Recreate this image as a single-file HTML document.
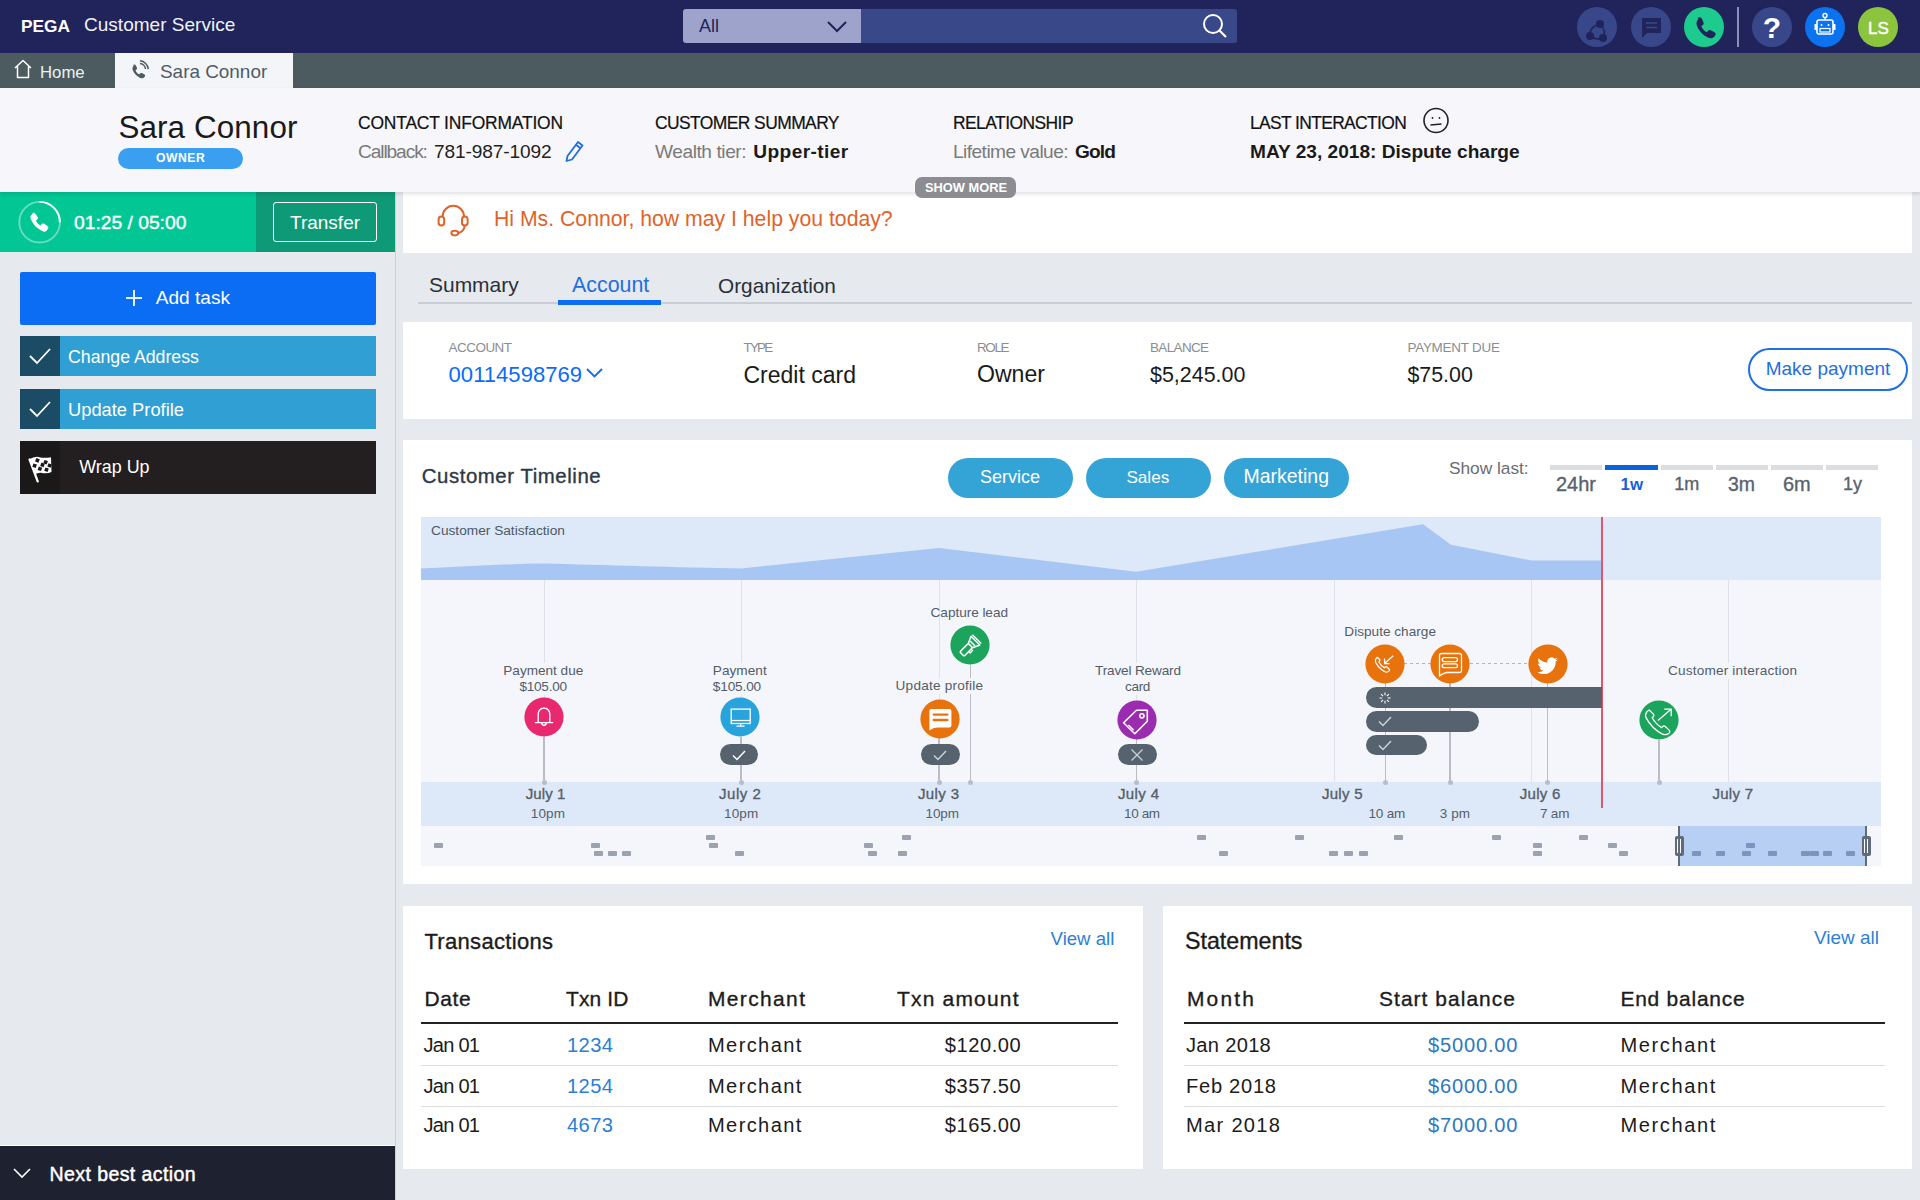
<!DOCTYPE html><html><head><meta charset="utf-8"><style>
html,body{margin:0;padding:0;}
body{width:1920px;height:1200px;position:relative;overflow:hidden;background:#e6e9ee;font-family:"Liberation Sans",sans-serif;}
.t{position:absolute;white-space:nowrap;}
.r{position:absolute;}
</style></head><body>
<div class="r" style="left:0px;top:192px;width:395px;height:1008px;background:#e6e9ee;"></div>
<div class="r" style="left:395px;top:192px;width:1px;height:1008px;background:#cdd1d7;"></div>
<div class="r" style="left:0px;top:192px;width:256px;height:60px;background:#02c795;"></div>
<div class="r" style="left:256px;top:192px;width:139px;height:60px;background:#0f9a77;"></div>
<svg class="r" style="left:17px;top:200px;" width="46" height="46" viewBox="0 0 46 46"><circle cx="22.6" cy="22.2" r="20.3" fill="none" stroke="rgba(255,255,255,0.4)" stroke-width="1.9"/><path d="M22.6 1.9 A20.3 20.3 0 0 1 42.9 22.2" fill="none" stroke="#fff" stroke-width="1.9"/><g transform="translate(10.5 10.6) scale(0.98)"><path d="M5.5 2.5 c1-0.6 2-0.3 2.6 0.6 l2.2 3.4 c0.6 0.9 0.4 2-0.4 2.7 l-1.3 1 c0.9 2.2 2.5 4 4.6 5.1 l1-1.3 c0.7-0.9 1.9-1.1 2.8-0.5 l3.4 2.2 c0.9 0.6 1.2 1.7 0.6 2.6 l-1 1.6 c-0.8 1.3-2.4 1.9-3.9 1.4 C9.7 18.5 5.5 14.3 3.1 7.9 c-0.5-1.5 0.1-3.1 1.4-3.9z" fill="#fff"/></g></svg>
<div class="t" style="left:74.00px;top:211.74px;font-size:19.27px;line-height:22.16px;color:#fff;-webkit-text-stroke:0.4px #fff;letter-spacing:-0.010px;">01:25 / 05:00</div>
<div class="r" style="left:273px;top:202px;width:101.5px;height:38px;background:transparent;border:1.8px solid #fff;border-radius:3px;"></div>
<div class="t" style="left:289.99px;top:211.99px;font-size:19.00px;line-height:21.85px;color:#fff;">Transfer</div>
<div class="r" style="left:20px;top:272px;width:356px;height:53px;background:#0b6cf4;border-radius:2px;"></div>
<svg class="r" style="left:125px;top:289px;" width="18" height="18" viewBox="0 0 18 18"><line x1="9" y1="1" x2="9" y2="17" stroke="#fff" stroke-width="1.8"/><line x1="1" y1="9" x2="17" y2="9" stroke="#fff" stroke-width="1.8"/></svg>
<div class="t" style="left:155.80px;top:287.43px;font-size:19.07px;line-height:21.93px;color:#fff;">Add task</div>
<div class="r" style="left:20px;top:336px;width:356px;height:40px;background:#2f9fd4;"></div>
<div class="r" style="left:20px;top:336px;width:40px;height:40px;background:#1c4b66;"></div>
<svg class="r" style="left:28px;top:345px;" width="24" height="22" viewBox="0 0 24 22"><polyline points="2,11 9,18 22,4" fill="none" stroke="#fff" stroke-width="1.8"/></svg>
<div class="t" style="left:68.00px;top:346.67px;font-size:17.72px;line-height:20.38px;color:#fff;">Change Address</div>
<div class="r" style="left:20px;top:389px;width:356px;height:40px;background:#2f9fd4;"></div>
<div class="r" style="left:20px;top:389px;width:40px;height:40px;background:#1c4b66;"></div>
<svg class="r" style="left:28px;top:398px;" width="24" height="22" viewBox="0 0 24 22"><polyline points="2,11 9,18 22,4" fill="none" stroke="#fff" stroke-width="1.8"/></svg>
<div class="t" style="left:68.00px;top:399.13px;font-size:18.31px;line-height:21.05px;color:#fff;">Update Profile</div>
<div class="r" style="left:20px;top:441px;width:356px;height:53px;background:#231f20;"></div>
<div class="r" style="left:20px;top:441px;width:40px;height:53px;background:#1b1819;"></div>
<svg class="r" style="left:20px;top:441px;" width="40" height="53" viewBox="0 0 40 53"><path d="M9.3 18.3 Q14 15.3 18.5 15.9 Q24.5 17.6 31 16.2 L31.5 30.9 Q27 33.2 21 31.8 Q17.5 31.6 14.8 33.6 Z" fill="#fff"/><line x1="9.6" y1="18.5" x2="17.7" y2="40.4" stroke="#fff" stroke-width="2.3" stroke-linecap="round"/><rect x="15.6" y="17.6" width="3.6" height="3.6" transform="rotate(20 17.4 19.4)" fill="#1b1a1b"/><rect x="23.8" y="19.4" width="3.6" height="3.6" transform="rotate(20 25.6 21.2)" fill="#1b1a1b"/><rect x="12.8" y="22.9" width="3.6" height="3.6" transform="rotate(20 14.6 24.7)" fill="#1b1a1b"/><rect x="20.7" y="22.1" width="3.6" height="3.6" transform="rotate(20 22.5 23.9)" fill="#1b1a1b"/><rect x="27.8" y="22.7" width="3.6" height="3.6" transform="rotate(20 29.6 24.5)" fill="#1b1a1b"/><rect x="18.1" y="26.0" width="3.6" height="3.6" transform="rotate(20 19.9 27.8)" fill="#1b1a1b"/><rect x="24.7" y="26.9" width="3.6" height="3.6" transform="rotate(20 26.5 28.7)" fill="#1b1a1b"/></svg>
<div class="t" style="left:79.30px;top:456.50px;font-size:17.90px;line-height:20.59px;color:#fff;">Wrap Up</div>
<div class="r" style="left:0px;top:1145px;width:395px;height:1px;background:#ffffff;"></div>
<div class="r" style="left:0px;top:1146px;width:395px;height:54px;background:#1e2130;"></div>
<svg class="r" style="left:12px;top:1166px;" width="20" height="14" viewBox="0 0 20 14"><polyline points="2,3 10,11 18,3" fill="none" stroke="#fff" stroke-width="1.6"/></svg>
<div class="t" style="left:49.60px;top:1163.48px;font-size:19.55px;line-height:22.49px;color:#fff;-webkit-text-stroke:0.45px #fff;letter-spacing:0.400px;">Next best action</div>
<div class="r" style="left:403px;top:192px;width:1517px;height:1008px;background:#e6e9ee;"></div>
<div class="r" style="left:403px;top:192px;width:1509px;height:61px;background:#ffffff;"></div>
<svg class="r" style="left:434px;top:204px;" width="38" height="34" viewBox="0 0 38 34"><path d="M8.6 12.5 A10.7 10.7 0 0 1 30 12.5" fill="none" stroke="#e0632a" stroke-width="2"/><rect x="4.6" y="12.6" width="5.6" height="9" rx="2.8" fill="none" stroke="#e0632a" stroke-width="2"/><rect x="28" y="12.6" width="5.6" height="9" rx="2.8" fill="none" stroke="#e0632a" stroke-width="2"/><path d="M30.8 21.4 Q30 27.5 24.6 29" fill="none" stroke="#e0632a" stroke-width="2"/><ellipse cx="20.8" cy="29.1" rx="3.4" ry="2.3" fill="none" stroke="#e0632a" stroke-width="2"/></svg>
<div class="t" style="left:494.00px;top:207.44px;font-size:21.23px;line-height:24.41px;color:#e0632a;">Hi Ms. Connor, how may I help you today?</div>
<div class="r" style="left:418px;top:302px;width:1494px;height:2px;background:#c9ced6;"></div>
<div class="t" style="left:429.00px;top:273.48px;font-size:20.97px;line-height:24.11px;color:#2a3038;">Summary</div>
<div class="t" style="left:572.00px;top:273.09px;font-size:21.39px;line-height:24.60px;color:#1f6fe0;">Account</div>
<div class="t" style="left:718.00px;top:273.62px;font-size:20.81px;line-height:23.93px;color:#2a3038;">Organization</div>
<div class="r" style="left:558px;top:300px;width:103px;height:5px;background:#0b6cf4;"></div>
<div class="r" style="left:403px;top:322px;width:1509px;height:97px;background:#ffffff;"></div>
<div class="t" style="left:448.60px;top:339.84px;font-size:13.41px;line-height:15.42px;color:#8a8d92;letter-spacing:-0.482px;">ACCOUNT</div>
<div class="t" style="left:448.60px;top:362.36px;font-size:22.08px;line-height:25.39px;color:#0b6cf4;">00114598769</div>
<div class="t" style="left:743.50px;top:339.84px;font-size:13.41px;line-height:15.42px;color:#8a8d92;letter-spacing:-1.773px;">TYPE</div>
<div class="t" style="left:743.50px;top:361.50px;font-size:23.00px;line-height:26.46px;color:#1a1a1a;">Credit card</div>
<div class="t" style="left:977.00px;top:339.84px;font-size:13.41px;line-height:15.42px;color:#8a8d92;letter-spacing:-1.337px;">ROLE</div>
<div class="t" style="left:977.00px;top:361.42px;font-size:23.09px;line-height:26.55px;color:#1a1a1a;">Owner</div>
<div class="t" style="left:1150.00px;top:339.84px;font-size:13.41px;line-height:15.42px;color:#8a8d92;letter-spacing:-0.599px;">BALANCE</div>
<div class="t" style="left:1150.00px;top:362.94px;font-size:21.45px;line-height:24.66px;color:#1a1a1a;">$5,245.00</div>
<div class="t" style="left:1407.40px;top:339.84px;font-size:13.41px;line-height:15.42px;color:#8a8d92;letter-spacing:-0.202px;">PAYMENT DUE</div>
<div class="t" style="left:1407.40px;top:362.99px;font-size:21.38px;line-height:24.59px;color:#1a1a1a;">$75.00</div>
<svg class="r" style="left:585px;top:366px;" width="20" height="14" viewBox="0 0 20 14"><polyline points="2,3 9.5,10.5 17,3" fill="none" stroke="#0b6cf4" stroke-width="1.8"/></svg>
<div class="r" style="left:1748px;top:348px;width:156px;height:39px;background:#fff;border:2px solid #1f6fe0;border-radius:22px;"></div>
<div class="t" style="left:1765.70px;top:358.49px;font-size:19.00px;line-height:21.85px;color:#1f6fe0;">Make payment</div>
<div class="r" style="left:403px;top:440px;width:1509px;height:444px;background:#ffffff;"></div>
<div class="r" style="left:403px;top:906px;width:740px;height:263px;background:#ffffff;"></div>
<div class="r" style="left:1163px;top:906px;width:749px;height:263px;background:#ffffff;"></div>
<div class="t" style="left:421.80px;top:465.40px;font-size:20.40px;line-height:23.46px;color:#2d3846;-webkit-text-stroke:0.35px currentColor;letter-spacing:0.554px;">Customer Timeline</div>
<div class="r" style="left:948px;top:458px;width:125px;height:40px;background:#34a3d6;border-radius:20px;"></div>
<div class="t" style="left:980.00px;top:466.66px;font-size:18.05px;line-height:20.76px;color:#fff;">Service</div>
<div class="r" style="left:1086px;top:458px;width:125px;height:40px;background:#34a3d6;border-radius:20px;"></div>
<div class="t" style="left:1126.40px;top:467.50px;font-size:17.15px;line-height:19.72px;color:#fff;">Sales</div>
<div class="r" style="left:1224px;top:458px;width:125px;height:40px;background:#34a3d6;border-radius:20px;"></div>
<div class="t" style="left:1243.60px;top:465.38px;font-size:19.45px;line-height:22.37px;color:#fff;">Marketing</div>
<div class="t" style="left:1449.00px;top:458.98px;font-size:17.28px;line-height:19.87px;color:#6a6d72;">Show last:</div>
<div class="r" style="left:1550px;top:465px;width:52px;height:5px;background:#dcdde0;"></div>
<div class="t" style="left:1556.00px;top:472.58px;font-size:19.99px;line-height:22.99px;color:#58626e;-webkit-text-stroke:0.35px currentColor;">24hr</div>
<div class="r" style="left:1605px;top:465px;width:53px;height:5px;background:#0b62dc;"></div>
<div class="t" style="left:1620.50px;top:475.46px;font-size:16.87px;line-height:19.40px;color:#1562d8;font-weight:bold;">1w</div>
<div class="r" style="left:1661px;top:465px;width:52px;height:5px;background:#dcdde0;"></div>
<div class="t" style="left:1674.30px;top:474.42px;font-size:18.00px;line-height:20.70px;color:#58626e;-webkit-text-stroke:0.35px currentColor;">1m</div>
<div class="r" style="left:1716px;top:465px;width:52px;height:5px;background:#dcdde0;"></div>
<div class="t" style="left:1728.00px;top:473.09px;font-size:19.44px;line-height:22.35px;color:#58626e;-webkit-text-stroke:0.35px currentColor;">3m</div>
<div class="r" style="left:1771px;top:465px;width:52px;height:5px;background:#dcdde0;"></div>
<div class="t" style="left:1783.00px;top:472.62px;font-size:19.94px;line-height:22.93px;color:#58626e;-webkit-text-stroke:0.35px currentColor;">6m</div>
<div class="r" style="left:1826px;top:465px;width:52px;height:5px;background:#dcdde0;"></div>
<div class="t" style="left:1843.00px;top:474.42px;font-size:17.99px;line-height:20.69px;color:#58626e;-webkit-text-stroke:0.35px currentColor;">1y</div>
<div class="r" style="left:421px;top:517px;width:1460px;height:63px;background:#dde8f8;"></div>
<svg class="r" style="left:421px;top:517px;" width="1460" height="63" viewBox="0 0 1460 63"><path d="M0 51.5 C40 50 80 47 122.7 46.5 C180 48 260 50.5 320 51.5 L518 31 L715 54.7 L1002 7.2 L1030 27.8 L1111 43.6 L1181 43.6 L1181 63 L0 63 Z" fill="#a8c6f3"/></svg>
<div class="t" style="left:431.00px;top:522.78px;font-size:13.70px;line-height:15.75px;color:#4d5866;">Customer Satisfaction</div>
<div class="r" style="left:421px;top:580px;width:1460px;height:202px;background:#f4f6fb;"></div>
<div class="r" style="left:421px;top:782px;width:1460px;height:44px;background:#dde8f8;"></div>
<div class="r" style="left:421px;top:826px;width:1460px;height:40px;background:#f4f6fb;"></div>
<div class="r" style="left:544px;top:580px;width:1px;height:202px;background:#dde1e8;"></div>
<div class="r" style="left:741px;top:580px;width:1px;height:202px;background:#dde1e8;"></div>
<div class="r" style="left:939px;top:580px;width:1px;height:202px;background:#dde1e8;"></div>
<div class="r" style="left:1136px;top:580px;width:1px;height:202px;background:#dde1e8;"></div>
<div class="r" style="left:1334px;top:580px;width:1px;height:202px;background:#dde1e8;"></div>
<div class="r" style="left:1531px;top:580px;width:1px;height:202px;background:#dde1e8;"></div>
<div class="r" style="left:1728px;top:580px;width:1px;height:202px;background:#dde1e8;"></div>
<div class="r" style="left:1679px;top:826px;width:187px;height:40px;background:#b6cff3;"></div>
<div class="r" style="left:434px;top:843px;width:9px;height:5px;background:#9aa3af;border-radius:1px;"></div>
<div class="r" style="left:591px;top:843px;width:9px;height:5px;background:#9aa3af;border-radius:1px;"></div>
<div class="r" style="left:594px;top:851px;width:9px;height:5px;background:#9aa3af;border-radius:1px;"></div>
<div class="r" style="left:608px;top:851px;width:9px;height:5px;background:#9aa3af;border-radius:1px;"></div>
<div class="r" style="left:622px;top:851px;width:9px;height:5px;background:#9aa3af;border-radius:1px;"></div>
<div class="r" style="left:706px;top:835px;width:9px;height:5px;background:#9aa3af;border-radius:1px;"></div>
<div class="r" style="left:709px;top:843px;width:9px;height:5px;background:#9aa3af;border-radius:1px;"></div>
<div class="r" style="left:735px;top:851px;width:9px;height:5px;background:#9aa3af;border-radius:1px;"></div>
<div class="r" style="left:864px;top:843px;width:9px;height:5px;background:#9aa3af;border-radius:1px;"></div>
<div class="r" style="left:868px;top:851px;width:9px;height:5px;background:#9aa3af;border-radius:1px;"></div>
<div class="r" style="left:902px;top:835px;width:9px;height:5px;background:#9aa3af;border-radius:1px;"></div>
<div class="r" style="left:898px;top:851px;width:9px;height:5px;background:#9aa3af;border-radius:1px;"></div>
<div class="r" style="left:1197px;top:835px;width:9px;height:5px;background:#9aa3af;border-radius:1px;"></div>
<div class="r" style="left:1219px;top:851px;width:9px;height:5px;background:#9aa3af;border-radius:1px;"></div>
<div class="r" style="left:1295px;top:835px;width:9px;height:5px;background:#9aa3af;border-radius:1px;"></div>
<div class="r" style="left:1329px;top:851px;width:9px;height:5px;background:#9aa3af;border-radius:1px;"></div>
<div class="r" style="left:1344px;top:851px;width:9px;height:5px;background:#9aa3af;border-radius:1px;"></div>
<div class="r" style="left:1359px;top:851px;width:9px;height:5px;background:#9aa3af;border-radius:1px;"></div>
<div class="r" style="left:1394px;top:835px;width:9px;height:5px;background:#9aa3af;border-radius:1px;"></div>
<div class="r" style="left:1492px;top:835px;width:9px;height:5px;background:#9aa3af;border-radius:1px;"></div>
<div class="r" style="left:1533px;top:843px;width:9px;height:5px;background:#9aa3af;border-radius:1px;"></div>
<div class="r" style="left:1533px;top:851px;width:9px;height:5px;background:#9aa3af;border-radius:1px;"></div>
<div class="r" style="left:1579px;top:835px;width:9px;height:5px;background:#9aa3af;border-radius:1px;"></div>
<div class="r" style="left:1608px;top:843px;width:9px;height:5px;background:#9aa3af;border-radius:1px;"></div>
<div class="r" style="left:1619px;top:851px;width:9px;height:5px;background:#9aa3af;border-radius:1px;"></div>
<div class="r" style="left:1692px;top:851px;width:9px;height:5px;background:#7b95bf;border-radius:1px;"></div>
<div class="r" style="left:1716px;top:851px;width:9px;height:5px;background:#7b95bf;border-radius:1px;"></div>
<div class="r" style="left:1746px;top:843px;width:9px;height:5px;background:#7b95bf;border-radius:1px;"></div>
<div class="r" style="left:1742px;top:851px;width:9px;height:5px;background:#7b95bf;border-radius:1px;"></div>
<div class="r" style="left:1768px;top:851px;width:9px;height:5px;background:#7b95bf;border-radius:1px;"></div>
<div class="r" style="left:1801px;top:851px;width:9px;height:5px;background:#7b95bf;border-radius:1px;"></div>
<div class="r" style="left:1810px;top:851px;width:9px;height:5px;background:#7b95bf;border-radius:1px;"></div>
<div class="r" style="left:1823px;top:851px;width:9px;height:5px;background:#7b95bf;border-radius:1px;"></div>
<div class="r" style="left:1846px;top:851px;width:9px;height:5px;background:#7b95bf;border-radius:1px;"></div>
<div class="r" style="left:1678px;top:826px;width:2px;height:40px;background:#5f6b78;"></div>
<div class="r" style="left:1675px;top:836px;width:9px;height:20px;background:#5f6b78;border-radius:2px;"></div>
<div class="r" style="left:1677px;top:839px;width:1px;height:14px;background:#fff;"></div>
<div class="r" style="left:1680px;top:839px;width:1px;height:14px;background:#fff;"></div>
<div class="r" style="left:1865px;top:826px;width:2px;height:40px;background:#5f6b78;"></div>
<div class="r" style="left:1862px;top:836px;width:9px;height:20px;background:#5f6b78;border-radius:2px;"></div>
<div class="r" style="left:1864px;top:839px;width:1px;height:14px;background:#fff;"></div>
<div class="r" style="left:1867px;top:839px;width:1px;height:14px;background:#fff;"></div>
<div class="r" style="left:1601px;top:517px;width:2px;height:291px;background:#e0566a;"></div>
<div class="t" style="left:503.30px;top:663.27px;font-size:13.60px;line-height:15.64px;color:#535d69;background:#f4f6fb;letter-spacing:-0.013px;">Payment due</div>
<div class="t" style="left:519.50px;top:679.17px;font-size:13.60px;line-height:15.64px;color:#535d69;background:#f4f6fb;letter-spacing:-0.276px;">$105.00</div>
<div class="r" style="left:543px;top:737px;width:1.6px;height:45px;background:#b9bec6;"></div>
<div class="r" style="left:541.5px;top:779.5px;width:5px;height:5px;background:#b9bec6;border-radius:50%;"></div>
<svg class="r" style="left:524.00px;top:697.20px;" width="40" height="40" viewBox="0 0 40 40"><circle cx="20" cy="20" r="19.6" fill="#e8296f"/><path d="M14.2 25.2 V16.8 a5.8 5.8 0 0 1 11.6 0 V25.2 M10.8 25.6 H29.2 M17.6 25.8 a2.4 2.4 0 0 0 4.8 0 M20 10.2 V11" fill="none" stroke="#fff" stroke-width="1.35"/></svg>
<div class="t" style="left:712.80px;top:663.27px;font-size:13.60px;line-height:15.64px;color:#535d69;background:#f4f6fb;letter-spacing:0.039px;">Payment</div>
<div class="t" style="left:712.80px;top:679.17px;font-size:13.60px;line-height:15.64px;color:#535d69;background:#f4f6fb;letter-spacing:-0.126px;">$105.00</div>
<div class="r" style="left:740px;top:737px;width:1.6px;height:45px;background:#b9bec6;"></div>
<div class="r" style="left:738.5px;top:779.5px;width:5px;height:5px;background:#b9bec6;border-radius:50%;"></div>
<svg class="r" style="left:719.80px;top:697.20px;" width="40" height="40" viewBox="0 0 40 40"><circle cx="20" cy="20" r="19.6" fill="#28a3dc"/><rect x="11.2" y="12.1" width="19" height="14.4" fill="none" stroke="#fff" stroke-width="1.3"/><line x1="11.2" y1="23.5" x2="30.2" y2="23.5" stroke="#fff" stroke-width="1.2"/><path d="M20.7 26.5 V29 M16.5 29.2 H24.5" stroke="#fff" stroke-width="1.3"/></svg>
<div class="r" style="left:720px;top:744px;width:38px;height:21px;background:#56626e;border-radius:10.5px;"></div>
<svg class="r" style="left:731px;top:748px;" width="16" height="14" viewBox="0 0 16 14"><polyline points="2,7.5 6,11.5 14,3" fill="none" stroke="#ffffff" stroke-width="1.5"/></svg>
<div class="t" style="left:930.60px;top:605.47px;font-size:13.60px;line-height:15.64px;color:#535d69;letter-spacing:-0.043px;">Capture lead</div>
<div class="r" style="left:969.5px;top:665px;width:1.6px;height:117px;background:#b9bec6;"></div>
<div class="r" style="left:968.0px;top:779.5px;width:5px;height:5px;background:#b9bec6;border-radius:50%;"></div>
<svg class="r" style="left:950.40px;top:625.00px;" width="40" height="40" viewBox="0 0 40 40"><circle cx="20" cy="20" r="19.6" fill="#1ca45c"/><g transform="translate(20.8 20.2) rotate(-45)"><rect x="-12.5" y="-3" width="12" height="6" rx="1" fill="none" stroke="#fff" stroke-width="1.5"/><path d="M-0.5 -3 L6.5 -6.2 V6.2 L-0.5 3" fill="none" stroke="#fff" stroke-width="1.5" stroke-linejoin="round"/><path d="M2.5 -3.5 V3.5 M8.5 -6.2 V6.2" stroke="#fff" stroke-width="1.5"/><path d="M-6 3 V5 H-2.5 V3" fill="none" stroke="#fff" stroke-width="1.3"/></g></svg>
<div class="t" style="left:895.60px;top:677.87px;font-size:13.60px;line-height:15.64px;color:#535d69;background:#f4f6fb;letter-spacing:0.210px;">Update profile</div>
<div class="r" style="left:938px;top:738px;width:1.6px;height:44px;background:#b9bec6;"></div>
<div class="r" style="left:936.5px;top:779.5px;width:5px;height:5px;background:#b9bec6;border-radius:50%;"></div>
<svg class="r" style="left:920.30px;top:698.80px;" width="40" height="40" viewBox="0 0 40 40"><circle cx="20" cy="20" r="19.6" fill="#e8730d"/><path d="M11.4 10 H29.4 a2 2 0 0 1 2 2 V26.6 a2 2 0 0 1-2 2 H17.5 Q13 28.6 9.4 31.6 V12 a2 2 0 0 1 2-2 Z" fill="#fff"/><line x1="13.7" y1="15.6" x2="27.4" y2="15.6" stroke="#e8730d" stroke-width="2.3" stroke-linecap="round"/><line x1="13.7" y1="21" x2="27.4" y2="21" stroke="#e8730d" stroke-width="2.3" stroke-linecap="round"/></svg>
<div class="r" style="left:921px;top:744px;width:39px;height:21px;background:#56626e;border-radius:10.5px;"></div>
<svg class="r" style="left:932px;top:748px;" width="16" height="14" viewBox="0 0 16 14"><polyline points="2,7.5 6,11.5 14,3" fill="none" stroke="#c9d2da" stroke-width="1.5"/></svg>
<div class="t" style="left:1095.00px;top:663.47px;font-size:13.60px;line-height:15.64px;color:#535d69;background:#f4f6fb;letter-spacing:-0.160px;">Travel Reward</div>
<div class="t" style="left:1125.00px;top:679.07px;font-size:13.60px;line-height:15.64px;color:#535d69;background:#f4f6fb;letter-spacing:-0.351px;">card</div>
<div class="r" style="left:1135.5px;top:739px;width:1.6px;height:43px;background:#b9bec6;"></div>
<div class="r" style="left:1134.0px;top:779.5px;width:5px;height:5px;background:#b9bec6;border-radius:50%;"></div>
<svg class="r" style="left:1117.20px;top:699.80px;" width="40" height="40" viewBox="0 0 40 40"><circle cx="20" cy="20" r="19.6" fill="#9b2cb0"/><path d="M19.5 10.2 H30.3 V21.3 L17.8 33.8 L6.6 22.8 Z" fill="none" stroke="#fff" stroke-width="1.6" stroke-linejoin="round"/><circle cx="24.9" cy="15.8" r="2.1" fill="none" stroke="#fff" stroke-width="1.6"/><line x1="11.4" y1="25" x2="16.6" y2="30" stroke="#fff" stroke-width="1.4"/></svg>
<div class="r" style="left:1118px;top:744px;width:39px;height:21px;background:#56626e;border-radius:10.5px;"></div>
<svg class="r" style="left:1130px;top:748px;" width="14" height="14" viewBox="0 0 14 14"><path d="M1.5 1.5 L12.5 12.5 M12.5 1.5 L1.5 12.5" fill="none" stroke="#c9d2da" stroke-width="1.3"/></svg>
<div class="t" style="left:1344.30px;top:623.87px;font-size:13.60px;line-height:15.64px;color:#535d69;background:#f4f6fb;letter-spacing:0.018px;">Dispute charge</div>
<svg class="r" style="left:1404px;top:662px;" width="126" height="3" viewBox="0 0 126 3"><line x1="0" y1="1.5" x2="126" y2="1.5" stroke="#b0b6bf" stroke-width="1.2" stroke-dasharray="3,3"/></svg>
<div class="r" style="left:1384.5px;top:683px;width:1.6px;height:99px;background:#b9bec6;"></div>
<div class="r" style="left:1383.0px;top:779.5px;width:5px;height:5px;background:#b9bec6;border-radius:50%;"></div>
<div class="r" style="left:1449.3px;top:683px;width:1.6px;height:99px;background:#b9bec6;"></div>
<div class="r" style="left:1447.8px;top:779.5px;width:5px;height:5px;background:#b9bec6;border-radius:50%;"></div>
<div class="r" style="left:1546.6px;top:683px;width:1.6px;height:99px;background:#b9bec6;"></div>
<div class="r" style="left:1545.1px;top:779.5px;width:5px;height:5px;background:#b9bec6;border-radius:50%;"></div>
<div class="r" style="left:1366px;top:687px;width:236px;height:21px;background:#56626e;border-radius:10.5px 0 0 10.5px;"></div>
<div class="r" style="left:1366px;top:711px;width:113px;height:21px;background:#56626e;border-radius:10.5px;"></div>
<svg class="r" style="left:1377px;top:714px;" width="16" height="14" viewBox="0 0 16 14"><polyline points="2,7.5 6,11.5 14,3" fill="none" stroke="#c9d2da" stroke-width="1.5"/></svg>
<div class="r" style="left:1366px;top:734.5px;width:61px;height:20.5px;background:#56626e;border-radius:10.25px;"></div>
<svg class="r" style="left:1377px;top:738px;" width="16" height="14" viewBox="0 0 16 14"><polyline points="2,7.5 6,11.5 14,3" fill="none" stroke="#c9d2da" stroke-width="1.5"/></svg>
<svg class="r" style="left:1378px;top:690.5px;" width="14" height="14" viewBox="0 0 14 14"><line x1="9.80" y1="7.00" x2="12.50" y2="7.00" stroke="#fff" stroke-width="1.1"/><line x1="8.98" y1="8.98" x2="10.89" y2="10.89" stroke="#fff" stroke-width="1.1"/><line x1="7.00" y1="9.80" x2="7.00" y2="12.50" stroke="#fff" stroke-width="1.1"/><line x1="5.02" y1="8.98" x2="3.12" y2="10.89" stroke="#fff" stroke-width="1.1"/><line x1="4.20" y1="7.00" x2="1.50" y2="7.01" stroke="#fff" stroke-width="1.1"/><line x1="5.02" y1="5.02" x2="3.10" y2="3.12" stroke="#fff" stroke-width="1.1"/><line x1="6.99" y1="4.20" x2="6.99" y2="1.50" stroke="#fff" stroke-width="1.1"/><line x1="8.97" y1="5.01" x2="10.88" y2="3.10" stroke="#fff" stroke-width="1.1"/></svg>
<svg class="r" style="left:1365.10px;top:643.60px;" width="40" height="40" viewBox="0 0 40 40"><circle cx="20" cy="20" r="19.6" fill="#e8730d"/><path d="M12.3 13.3 L14.8 15.8 Q15.2 16.6 14.4 17.4 L13.8 18 Q15.8 21.6 19.4 23.8 L20 23.2 Q20.8 22.4 21.6 22.8 L24.3 25.3 Q25 26.2 24 27.1 Q22.4 28.6 20.2 27.8 Q13.8 24.6 10.6 18.2 Q9.9 16 11.4 14.2 Q11.8 13.6 12.3 13.3 Z" fill="none" stroke="#fff" stroke-width="1.25" stroke-linejoin="round"/><path d="M28.2 11.8 L19.6 19.6 M19.6 14.6 V19.6 H24.6" fill="none" stroke="#fff" stroke-width="1.3"/></svg>
<svg class="r" style="left:1430.00px;top:643.60px;" width="40" height="40" viewBox="0 0 40 40"><circle cx="20" cy="20" r="19.6" fill="#e8730d"/><path d="M11.5 9.5 H29.5 a2 2 0 0 1 2 2 V26.5 a2 2 0 0 1-2 2 H16.5 Q12.5 29.5 9.5 32 V11.5 a2 2 0 0 1 2-2 Z" fill="none" stroke="#fff" stroke-width="1.3"/><rect x="12.2" y="13.6" width="15.3" height="4" rx="2" fill="none" stroke="#fff" stroke-width="1.2"/><rect x="12.2" y="19.8" width="15.3" height="3.8" rx="1.9" fill="none" stroke="#fff" stroke-width="1.2"/></svg>
<svg class="r" style="left:1527.50px;top:643.60px;" width="40" height="40" viewBox="0 0 40 40"><circle cx="20" cy="20" r="19.6" fill="#e8730d"/><g transform="translate(9.3 11.5) scale(0.854)"><path d="M23.953 4.57a10 10 0 01-2.825.775 4.958 4.958 0 002.163-2.723c-.951.555-2.005.959-3.127 1.184a4.92 4.92 0 00-8.384 4.482C7.69 8.095 4.067 6.13 1.64 3.162a4.822 4.822 0 00-.666 2.475c0 1.71.87 3.213 2.188 4.096a4.904 4.904 0 01-2.228-.616v.06a4.923 4.923 0 003.946 4.827 4.996 4.996 0 01-2.212.085 4.936 4.936 0 004.604 3.417 9.867 9.867 0 01-6.102 2.105c-.39 0-.779-.023-1.17-.067a13.995 13.995 0 007.557 2.209c9.053 0 13.998-7.496 13.998-13.985 0-.21 0-.42-.015-.63A9.935 9.935 0 0024 4.59z" fill="#fff"/></g></svg>
<div class="t" style="left:1668.00px;top:663.47px;font-size:13.60px;line-height:15.64px;color:#535d69;background:#f4f6fb;letter-spacing:0.186px;">Customer interaction</div>
<div class="r" style="left:1658px;top:739.5px;width:1.6px;height:42.5px;background:#b9bec6;"></div>
<div class="r" style="left:1656.5px;top:779.5px;width:5px;height:5px;background:#b9bec6;border-radius:50%;"></div>
<svg class="r" style="left:1639.30px;top:699.90px;" width="40" height="40" viewBox="0 0 40 40"><circle cx="20" cy="20" r="19.6" fill="#1ca45c"/><path d="M10.2 10 L14.6 14.4 Q15.4 15.6 14.2 16.8 L13.2 17.8 Q16.6 24 22.6 27.6 L23.6 26.6 Q24.8 25.4 26 26.2 L30.4 30.4 Q31.4 31.8 30 33.2 Q27.2 35.6 23.6 34.2 Q12.6 28.4 7 17.6 Q5.8 14.4 7.8 12 Q8.8 10.8 10.2 10 Z" fill="none" stroke="#fff" stroke-width="1.3" stroke-linejoin="round"/><path d="M19 20.5 L32 9.3 M25.2 9.2 H32.2 V16.2" fill="none" stroke="#fff" stroke-width="1.3"/></svg>
<div class="t" style="left:525.80px;top:785.38px;font-size:15.00px;line-height:17.25px;color:#555f6b;-webkit-text-stroke:0.35px currentColor;letter-spacing:0.063px;">July 1</div>
<div class="t" style="left:719.00px;top:785.38px;font-size:15.00px;line-height:17.25px;color:#555f6b;-webkit-text-stroke:0.35px currentColor;letter-spacing:0.523px;">July 2</div>
<div class="t" style="left:918.00px;top:785.38px;font-size:15.00px;line-height:17.25px;color:#555f6b;-webkit-text-stroke:0.35px currentColor;letter-spacing:0.363px;">July 3</div>
<div class="t" style="left:1118.00px;top:785.38px;font-size:15.00px;line-height:17.25px;color:#555f6b;-webkit-text-stroke:0.35px currentColor;letter-spacing:0.363px;">July 4</div>
<div class="t" style="left:1322.00px;top:785.38px;font-size:15.00px;line-height:17.25px;color:#555f6b;-webkit-text-stroke:0.35px currentColor;letter-spacing:0.263px;">July 5</div>
<div class="t" style="left:1519.80px;top:785.38px;font-size:15.00px;line-height:17.25px;color:#555f6b;-webkit-text-stroke:0.35px currentColor;letter-spacing:0.283px;">July 6</div>
<div class="t" style="left:1712.40px;top:785.38px;font-size:15.00px;line-height:17.25px;color:#555f6b;-webkit-text-stroke:0.35px currentColor;letter-spacing:0.283px;">July 7</div>
<div class="t" style="left:530.80px;top:805.86px;font-size:13.50px;line-height:15.52px;color:#555f6b;letter-spacing:0.144px;">10pm</div>
<div class="t" style="left:724.00px;top:805.86px;font-size:13.50px;line-height:15.52px;color:#555f6b;letter-spacing:0.178px;">10pm</div>
<div class="t" style="left:925.60px;top:805.86px;font-size:13.50px;line-height:15.52px;color:#555f6b;letter-spacing:-0.122px;">10pm</div>
<div class="t" style="left:1124.00px;top:805.86px;font-size:13.50px;line-height:15.52px;color:#555f6b;letter-spacing:-0.379px;">10 am</div>
<div class="t" style="left:1368.50px;top:805.86px;font-size:13.50px;line-height:15.52px;color:#555f6b;letter-spacing:-0.204px;">10 am</div>
<div class="t" style="left:1439.70px;top:805.86px;font-size:13.50px;line-height:15.52px;color:#555f6b;letter-spacing:0.097px;">3 pm</div>
<div class="t" style="left:1540.00px;top:805.86px;font-size:13.50px;line-height:15.52px;color:#555f6b;letter-spacing:-0.203px;">7 am</div>
<div class="t" style="left:424.40px;top:929.13px;font-size:22.00px;line-height:25.30px;color:#1c1c1c;-webkit-text-stroke:0.35px currentColor;letter-spacing:0.317px;">Transactions</div>
<div class="t" style="left:1050.60px;top:927.67px;font-size:18.58px;line-height:21.37px;color:#2b80d6;">View all</div>
<div class="t" style="left:424.40px;top:986.69px;font-size:20.95px;line-height:24.09px;color:#1c1c1c;-webkit-text-stroke:0.35px currentColor;letter-spacing:0.650px;">Date</div>
<div class="t" style="left:566.00px;top:986.69px;font-size:20.95px;line-height:24.09px;color:#1c1c1c;-webkit-text-stroke:0.35px currentColor;letter-spacing:0.142px;">Txn ID</div>
<div class="t" style="left:708.00px;top:986.69px;font-size:20.95px;line-height:24.09px;color:#1c1c1c;-webkit-text-stroke:0.35px currentColor;letter-spacing:1.383px;">Merchant</div>
<div class="t" style="left:897.00px;top:986.69px;font-size:20.95px;line-height:24.09px;color:#1c1c1c;-webkit-text-stroke:0.35px currentColor;letter-spacing:1.210px;">Txn amount</div>
<div class="r" style="left:421px;top:1022px;width:697px;height:2px;background:#222;"></div>
<div class="r" style="left:421px;top:1065px;width:697px;height:1px;background:#dcdcdc;"></div>
<div class="r" style="left:421px;top:1106px;width:697px;height:1px;background:#dcdcdc;"></div>
<div class="t" style="left:423.60px;top:1033.87px;font-size:20.11px;line-height:23.13px;color:#1c1c1c;letter-spacing:-0.796px;">Jan 01</div>
<div class="t" style="left:567.00px;top:1033.87px;font-size:20.11px;line-height:23.13px;color:#2b80d6;letter-spacing:0.421px;">1234</div>
<div class="t" style="left:708.00px;top:1033.87px;font-size:20.11px;line-height:23.13px;color:#1c1c1c;letter-spacing:1.353px;">Merchant</div>
<div class="t" style="left:944.70px;top:1033.87px;font-size:20.11px;line-height:23.13px;color:#1c1c1c;letter-spacing:0.568px;">$120.00</div>
<div class="t" style="left:423.60px;top:1075.07px;font-size:20.11px;line-height:23.13px;color:#1c1c1c;letter-spacing:-0.796px;">Jan 01</div>
<div class="t" style="left:567.00px;top:1075.07px;font-size:20.11px;line-height:23.13px;color:#2b80d6;letter-spacing:0.421px;">1254</div>
<div class="t" style="left:708.00px;top:1075.07px;font-size:20.11px;line-height:23.13px;color:#1c1c1c;letter-spacing:1.353px;">Merchant</div>
<div class="t" style="left:944.70px;top:1075.07px;font-size:20.11px;line-height:23.13px;color:#1c1c1c;letter-spacing:0.568px;">$357.50</div>
<div class="t" style="left:423.60px;top:1113.87px;font-size:20.11px;line-height:23.13px;color:#1c1c1c;letter-spacing:-0.796px;">Jan 01</div>
<div class="t" style="left:567.00px;top:1113.87px;font-size:20.11px;line-height:23.13px;color:#2b80d6;letter-spacing:0.421px;">4673</div>
<div class="t" style="left:708.00px;top:1113.87px;font-size:20.11px;line-height:23.13px;color:#1c1c1c;letter-spacing:1.353px;">Merchant</div>
<div class="t" style="left:944.70px;top:1113.87px;font-size:20.11px;line-height:23.13px;color:#1c1c1c;letter-spacing:0.568px;">$165.00</div>
<div class="t" style="left:1185.00px;top:927.99px;font-size:23.23px;line-height:26.72px;color:#1c1c1c;-webkit-text-stroke:0.35px currentColor;">Statements</div>
<div class="t" style="left:1814.00px;top:927.33px;font-size:18.96px;line-height:21.81px;color:#2b80d6;">View all</div>
<div class="t" style="left:1187.00px;top:986.69px;font-size:20.95px;line-height:24.09px;color:#1c1c1c;-webkit-text-stroke:0.35px currentColor;letter-spacing:2.145px;">Month</div>
<div class="t" style="left:1379.00px;top:986.69px;font-size:20.95px;line-height:24.09px;color:#1c1c1c;-webkit-text-stroke:0.35px currentColor;letter-spacing:1.047px;">Start balance</div>
<div class="t" style="left:1620.40px;top:986.69px;font-size:20.95px;line-height:24.09px;color:#1c1c1c;-webkit-text-stroke:0.35px currentColor;letter-spacing:0.783px;">End balance</div>
<div class="r" style="left:1184px;top:1022px;width:701px;height:2px;background:#222;"></div>
<div class="r" style="left:1184px;top:1065px;width:701px;height:1px;background:#dcdcdc;"></div>
<div class="r" style="left:1184px;top:1106px;width:701px;height:1px;background:#dcdcdc;"></div>
<div class="t" style="left:1186.00px;top:1033.87px;font-size:20.11px;line-height:23.13px;color:#1c1c1c;letter-spacing:0.293px;">Jan 2018</div>
<div class="t" style="left:1428.00px;top:1033.87px;font-size:20.11px;line-height:23.13px;color:#2c79be;letter-spacing:0.804px;">$5000.00</div>
<div class="t" style="left:1620.40px;top:1033.87px;font-size:20.11px;line-height:23.13px;color:#1c1c1c;letter-spacing:1.596px;">Merchant</div>
<div class="t" style="left:1186.00px;top:1075.07px;font-size:20.11px;line-height:23.13px;color:#1c1c1c;letter-spacing:0.718px;">Feb 2018</div>
<div class="t" style="left:1428.00px;top:1075.07px;font-size:20.11px;line-height:23.13px;color:#2c79be;letter-spacing:0.804px;">$6000.00</div>
<div class="t" style="left:1620.40px;top:1075.07px;font-size:20.11px;line-height:23.13px;color:#1c1c1c;letter-spacing:1.596px;">Merchant</div>
<div class="t" style="left:1186.00px;top:1113.87px;font-size:20.11px;line-height:23.13px;color:#1c1c1c;letter-spacing:1.292px;">Mar 2018</div>
<div class="t" style="left:1428.00px;top:1113.87px;font-size:20.11px;line-height:23.13px;color:#2c79be;letter-spacing:0.804px;">$7000.00</div>
<div class="t" style="left:1620.40px;top:1113.87px;font-size:20.11px;line-height:23.13px;color:#1c1c1c;letter-spacing:1.596px;">Merchant</div>
<div class="r" style="left:0px;top:0px;width:1920px;height:53px;background:#20245a;"></div>
<div class="t" style="left:21.00px;top:16.57px;font-size:17.29px;line-height:19.88px;color:#fff;font-weight:bold;letter-spacing:0px;">PEGA</div>
<div class="t" style="left:84.00px;top:14.45px;font-size:19.04px;line-height:21.90px;color:#f0f2f8;">Customer Service</div>
<div class="r" style="left:683px;top:9px;width:178px;height:34px;background:#9da3ca;border-radius:3px 0 0 3px;"></div>
<div class="r" style="left:861px;top:9px;width:376px;height:34px;background:#384888;border-radius:0 3px 3px 0;"></div>
<div class="t" style="left:699.00px;top:16.41px;font-size:18.00px;line-height:20.70px;color:#20245a;">All</div>
<svg class="r" style="left:826px;top:18px;" width="22" height="16" viewBox="0 0 22 16"><polyline points="2,4 11,13 20,4" fill="none" stroke="#20245a" stroke-width="2"/></svg>
<svg class="r" style="left:1200px;top:12px;" width="30" height="28" viewBox="0 0 30 28"><circle cx="13" cy="12" r="9" fill="none" stroke="#fff" stroke-width="2"/><line x1="19.5" y1="18.5" x2="26" y2="25" stroke="#fff" stroke-width="2.2"/></svg>
<div class="r" style="left:1577px;top:7px;width:40px;height:40px;background:#38478a;border-radius:50%;"></div>
<div class="r" style="left:1631px;top:7px;width:40px;height:40px;background:#38478a;border-radius:50%;"></div>
<div class="r" style="left:1684px;top:7px;width:40px;height:40px;background:#1ecb8e;border-radius:50%;"></div>
<div class="r" style="left:1752px;top:7px;width:40px;height:40px;background:#38478a;border-radius:50%;"></div>
<div class="r" style="left:1805px;top:7px;width:40px;height:40px;background:#0b72f0;border-radius:50%;"></div>
<div class="r" style="left:1858px;top:7px;width:40px;height:40px;background:#8cc43e;border-radius:50%;"></div>
<div class="r" style="left:1737px;top:7px;width:2px;height:40px;background:#8a90b8;"></div>
<svg class="r" style="left:1577px;top:7px;" width="40" height="40" viewBox="0 0 40 40"><circle cx="23" cy="17" r="4" fill="#20245a"/><circle cx="13" cy="29" r="4" fill="#20245a"/><circle cx="26" cy="31" r="4" fill="#20245a"/><path d="M23 17 Q12 20 13 29 M13 29 Q20 34 26 31 M26 31 Q30 24 23 17" fill="none" stroke="#20245a" stroke-width="1.6"/></svg>
<svg class="r" style="left:1631px;top:7px;" width="40" height="40" viewBox="0 0 40 40"><path d="M11 11 h19 v15 h-14 l-5 5 z" fill="#20245a"/><line x1="15" y1="16" x2="26" y2="16" stroke="#38478a" stroke-width="1.6"/><line x1="15" y1="20.5" x2="26" y2="20.5" stroke="#38478a" stroke-width="1.6"/></svg>
<svg class="r" style="left:1684px;top:7px;" width="40" height="40" viewBox="0 0 40 40"><path d="M13.5 11 c2-1.5 3.5-1 4.5 1 l1.5 3.5 c0.5 1.2 0 2-1 2.8 l-1.2 1 c1 2.5 3 4.8 5.5 6 l1-1.2 c0.8-1 1.8-1.3 2.8-0.8 l3.5 1.6 c1.8 0.8 2 2.5 0.8 4 c-1.8 2.2-4 2.8-6.5 1.8 c-5-2-9.5-6.8-11.5-12 c-0.9-2.6-0.5-4.9 1.6-6.7z" fill="#20245a"/></svg>
<div class="t" style="left:1762.84px;top:11.35px;font-size:30.00px;line-height:34.50px;color:#fff;font-weight:bold;">?</div>
<svg class="r" style="left:1805px;top:7px;" width="40" height="40" viewBox="0 0 40 40"><circle cx="20" cy="8.5" r="2" fill="none" stroke="#fff" stroke-width="1.4"/><line x1="20" y1="10.5" x2="20" y2="13" stroke="#fff" stroke-width="1.4"/><rect x="12" y="13" width="16" height="14" rx="2" fill="none" stroke="#fff" stroke-width="1.6"/><rect x="9.5" y="17" width="2.5" height="6" fill="#fff"/><rect x="28" y="17" width="2.5" height="6" fill="#fff"/><circle cx="16.5" cy="18" r="1" fill="#fff"/><circle cx="23.5" cy="18" r="1" fill="#fff"/><rect x="15" y="21.5" width="10" height="3.5" fill="none" stroke="#fff" stroke-width="1.2"/></svg>
<div class="t" style="left:1868.10px;top:19.03px;font-size:17.00px;line-height:19.55px;color:#fff;-webkit-text-stroke:0.4px #fff;">LS</div>
<div class="r" style="left:0px;top:53px;width:1920px;height:35px;background:#4b5b60;"></div>
<div class="r" style="left:115px;top:53px;width:178px;height:35px;background:#f4f5f9;"></div>
<svg class="r" style="left:12px;top:58px;" width="22" height="22" viewBox="0 0 22 22"><path d="M3 10 L11 2.5 L19 10 M5.5 8.5 V19.5 H16.5 V8.5" fill="none" stroke="#fff" stroke-width="1.5" stroke-linejoin="round"/></svg>
<div class="t" style="left:40.00px;top:62.86px;font-size:16.76px;line-height:19.27px;color:#eef1f3;">Home</div>
<svg class="r" style="left:129px;top:60px;" width="22" height="22" viewBox="0 0 22 22"><path d="M4 5 c1.2-1 2.2-0.8 2.9 0.6 l1 2.2 c0.4 0.8 0 1.4-0.6 1.9 l-0.8 0.7 c0.7 1.7 2 3.2 3.7 4 l0.7-0.8 c0.5-0.7 1.2-0.9 1.9-0.5 l2.3 1.1 c1.2 0.5 1.3 1.7 0.5 2.6 c-1.2 1.5-2.6 1.8-4.3 1.2 c-3.3-1.3-6.3-4.5-7.6-7.9 c-0.6-1.7-0.3-3.3 1.1-4.4z" fill="#4b5b60"/><path d="M11 3.5 a6 6 0 0 1 5.5 5.5 M11 0.8 a9 9 0 0 1 8.3 8.3" fill="none" stroke="#4b5b60" stroke-width="1.5"/></svg>
<div class="t" style="left:160.00px;top:60.88px;font-size:18.91px;line-height:21.74px;color:#4e5c66;">Sara Connor</div>
<div class="r" style="left:0px;top:88px;width:1920px;height:104px;background:#f7f7fb;box-shadow:0 2px 4px rgba(0,0,0,0.12);z-index:2;"></div>
<div style="position:absolute;left:0;top:88px;width:1920px;height:104px;z-index:3;">
</div>
<div class="t" style="left:118.50px;top:109.54px;font-size:31.42px;line-height:36.14px;color:#1a1a1a;z-index:5;letter-spacing:0.084px;">Sara Connor</div>
<div class="r" style="left:118px;top:148px;width:125px;height:21px;background:#3a9ff0;border-radius:11px;z-index:5;"></div>
<div class="t" style="left:156.00px;top:151.90px;font-size:12.15px;line-height:13.97px;color:#fff;font-weight:bold;z-index:5;letter-spacing:0.544px;">OWNER</div>
<div class="t" style="left:358.00px;top:113.11px;font-size:17.46px;line-height:20.08px;color:#111;z-index:5;-webkit-text-stroke:0.2px currentColor;letter-spacing:-0.178px;">CONTACT INFORMATION</div>
<div class="t" style="left:655.00px;top:113.11px;font-size:17.46px;line-height:20.08px;color:#111;z-index:5;-webkit-text-stroke:0.2px currentColor;letter-spacing:-0.577px;">CUSTOMER SUMMARY</div>
<div class="t" style="left:953.00px;top:113.11px;font-size:17.46px;line-height:20.08px;color:#111;z-index:5;-webkit-text-stroke:0.2px currentColor;letter-spacing:-0.551px;">RELATIONSHIP</div>
<div class="t" style="left:1250.00px;top:113.11px;font-size:17.46px;line-height:20.08px;color:#111;z-index:5;-webkit-text-stroke:0.2px currentColor;letter-spacing:-0.635px;">LAST INTERACTION</div>
<div class="t" style="left:358.00px;top:141.07px;font-size:19.13px;line-height:22.00px;color:#7a7a7a;z-index:5;letter-spacing:-1.086px;">Callback:</div>
<div class="t" style="left:434.00px;top:141.07px;font-size:19.13px;line-height:22.00px;color:#222;z-index:5;letter-spacing:-0.131px;">781-987-1092</div>
<svg class="r" style="left:563px;top:139px;z-index:5;" width="22" height="24" viewBox="0 0 22 24"><path d="M4.5 17 L15 3 L19.5 6.5 L9 20.5 L3.5 22 Z M13 5.8 L17.5 9.3" fill="none" stroke="#1f6fe0" stroke-width="1.8" stroke-linejoin="round"/></svg>
<div class="t" style="left:655.00px;top:141.07px;font-size:19.13px;line-height:22.00px;color:#7a7a7a;z-index:5;letter-spacing:-0.428px;">Wealth tier:</div>
<div class="t" style="left:753.30px;top:141.07px;font-size:19.13px;line-height:22.00px;color:#1a1a1a;font-weight:bold;z-index:5;letter-spacing:0.397px;">Upper-tier</div>
<div class="t" style="left:953.00px;top:141.07px;font-size:19.13px;line-height:22.00px;color:#7a7a7a;z-index:5;letter-spacing:-0.547px;">Lifetime value:</div>
<div class="t" style="left:1075.00px;top:141.07px;font-size:19.13px;line-height:22.00px;color:#1a1a1a;font-weight:bold;z-index:5;letter-spacing:-0.857px;">Gold</div>
<div class="t" style="left:1250.00px;top:141.07px;font-size:19.13px;line-height:22.00px;color:#1a1a1a;font-weight:bold;z-index:5;letter-spacing:-0.004px;">MAY 23, 2018: Dispute charge</div>
<svg class="r" style="left:1422px;top:107px;z-index:5;" width="28" height="28" viewBox="0 0 28 28"><circle cx="14" cy="13.5" r="12" fill="none" stroke="#222" stroke-width="1.6"/><circle cx="10.5" cy="11" r="0.9" fill="#222"/><circle cx="17.5" cy="11" r="0.9" fill="#222"/><line x1="8.5" y1="18" x2="19.5" y2="17" stroke="#222" stroke-width="1.6"/></svg>
<div class="r" style="left:915px;top:177px;width:101px;height:21px;background:#8b8d92;border-radius:7px;z-index:5;"></div>
<div class="t" style="left:925.00px;top:180.66px;font-size:12.85px;line-height:14.78px;color:#fff;font-weight:bold;z-index:5;letter-spacing:-0.011px;">SHOW MORE</div>
</body></html>
